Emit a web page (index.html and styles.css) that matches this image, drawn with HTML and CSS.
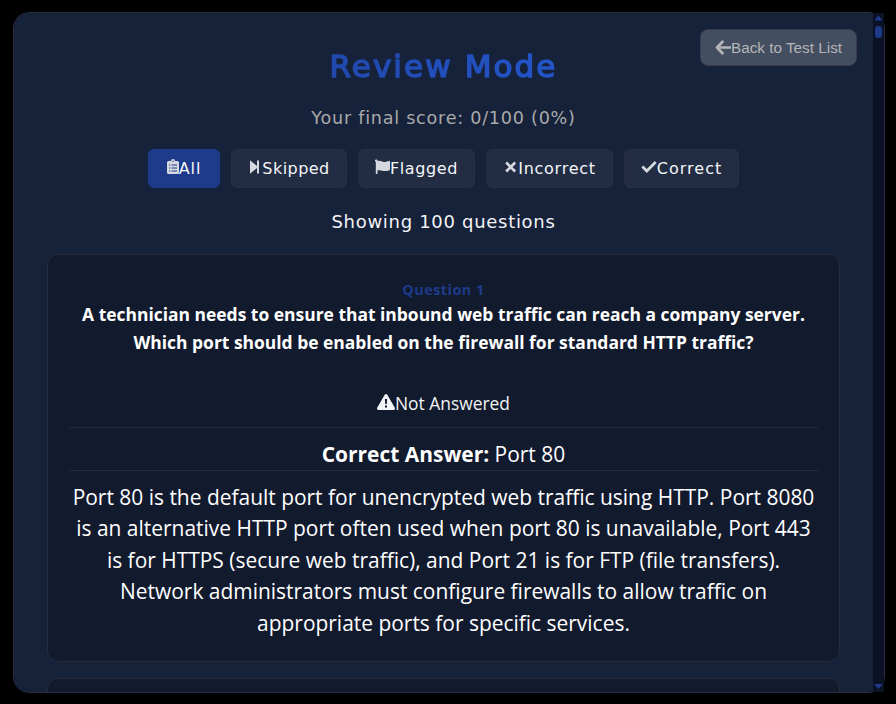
FILE: index.html
```html
<!DOCTYPE html>
<html lang="en">
<head>
<meta charset="utf-8">
<title>Review Mode</title>
<link rel="stylesheet" href="styles.css">
</head>
<body>
<main class="modal">
  <div class="content">
    <button class="back"><svg class="i-back" viewBox="0 0 16 14"><path d="M7.500 1.200 2 7l5.500 5.800M2.500 7H15" fill="none" stroke="currentColor" stroke-width="2.700" stroke-linecap="round" stroke-linejoin="round"/></svg><span>Back to Test List</span></button>
    <h1 class="title">Review Mode</h1>
    <p class="score">Your final score: 0/100 (0%)</p>
    <nav class="filters">
      <button class="filter all active"><svg width="12" height="16" viewBox="0 0 12 16"><path fill="currentColor" fill-rule="evenodd" d="M1.500 2H4a2 2 0 0 1 4 0h2.500A1.500 1.500 0 0 1 12 3.500v10a1.500 1.500 0 0 1-1.500 1.500h-9A1.500 1.500 0 0 1 0 13.500v-10A1.500 1.500 0 0 1 1.500 2ZM5.300 1.800v1h1.400v-1ZM2 5.500v1h1.300v-1Zm2.500 0v1H10v-1ZM2 8.500v1h1.300v-1Zm2.500 0v1H10v-1ZM2 11.500v1h1.300v-1Zm2.500 0v1H10v-1Z"/></svg><span>All</span></button>
      <button class="filter skipped"><svg width="12" height="16" viewBox="0 0 12 16"><path fill="currentColor" d="M0 1.200 7 7V1.500h2v13H7V9l-7 5.800Z"/></svg><span>Skipped</span></button>
      <button class="filter flagged"><svg width="15" height="16" viewBox="0 0 15 16"><path fill="currentColor" d="M1.500.5C2.300.5 2.500 1 2.500 2c3-.8 4 .9 6.500.9 2 0 4-.7 5-1 .7-.2 1 .1 1 .7v8c0 1-3 1.500-5 1.500-3 0-4-1.700-7.500-.6V15H.8V2.800A1.200 1.200 0 0 1 1.500.5Z"/></svg><span>Flagged</span></button>
      <button class="filter incorrect"><svg width="13" height="16" viewBox="0 0 13 16"><path fill="none" stroke="currentColor" stroke-width="2.700" d="m1.200 3.500 9 9m0-9-9 9"/></svg><span>Incorrect</span></button>
      <button class="filter correct"><svg width="16" height="16" viewBox="0 0 16 16"><path fill="none" stroke="currentColor" stroke-width="2.800" d="m1.300 7.500 4.500 4.500L14.700 3"/></svg><span>Correct</span></button>
    </nav>
    <p class="showing">Showing 100 questions</p>
    <article class="card">
      <h2 class="number">Question 1</h2>
      <p class="question">A technician needs to ensure that inbound web traffic can reach a company server.<br>Which port should be enabled on the firewall for standard HTTP traffic?</p>
      <p class="status"><svg width="18" height="16" viewBox="0 0 18 16"><path fill="currentColor" fill-rule="evenodd" d="M7.700.8a1.500 1.500 0 0 1 2.600 0l7.400 12.800A1.500 1.500 0 0 1 16.400 16H1.600A1.500 1.500 0 0 1 .3 13.600ZM7.900 5l.3 5h1.600l.3-5ZM8 11.500v2h2v-2Z"/></svg><span>Not Answered</span></p>
      <p class="answer"><strong>Correct Answer:</strong> Port 80</p>
      <p class="explanation">Port 80 is the default port for unencrypted web traffic using HTTP. Port 8080<br>is an alternative HTTP port often used when port 80 is unavailable, Port 443<br>is for HTTPS (secure web traffic), and Port 21 is for FTP (file transfers).<br>Network administrators must configure firewalls to allow traffic on<br>appropriate ports for specific services.</p>
    </article>
    <article class="card"></article>
  </div>
  <div class="scrollbar">
    <svg width="11" height="8" viewBox="0 0 11 8"><path fill="#1e3a8a" d="M5.500 2.500 9 6.500v1H2v-1Z"/></svg>
    <div class="thumb"></div>
    <svg class="down" width="11" height="8" viewBox="0 0 11 8"><path fill="#1e3a8a" d="M2 0h7v1L5.500 5 2 1Z"/></svg>
  </div>
</main>
</body>
</html>
```
FILE: styles.css
```css
* { box-sizing: border-box; }
body { margin: 0; height: 704px; overflow: hidden; background: #000; padding: 12px 11px 11px 13px; color: #fff; font-family: "Open Sans", sans-serif; }
h1, h2, p { margin: 0; font-weight: 400; white-space: nowrap; }
svg { display: block; flex: none; }
.modal { height: 681px; border: 1px solid #2a2c3d; border-radius: 16px; display: flex; background: #0c1226; }
.content { position: relative; width: 859px; height: 679px; padding: 0 33px; overflow: hidden; background: #16213a; border-radius: 15px 0 0 15px; text-align: center; }
.title, .score, .filter, .showing { font-family: "DejaVu Sans", sans-serif; }
.title { margin-top: 33px; height: 40px; font-size: 31px; font-weight: 400; line-height: 40px; letter-spacing: 2.100px; background: linear-gradient(90deg, #1e3a8a, #2563eb); -webkit-background-clip: text; background-clip: text; color: transparent; -webkit-text-stroke: 1.500px transparent; }
.score { margin-top: 20px; height: 24px; line-height: 24px; font-size: 17.600px; letter-spacing: .75px; color: #aaa; }
.back { position: absolute; right: 16px; top: 16px; width: 157px; height: 37px; display: flex; align-items: center; justify-content: center; border: 1px solid #393b4c; border-radius: 8px; background: #444e61; color: #b4b5b8; font: 15.300px "Liberation Sans", sans-serif; padding: 0; white-space: nowrap; }
.i-back { width: 16px; height: 15px; }
.filters { display: flex; justify-content: center; gap: 11px; margin-top: 19px; }
.filter { height: 39px; display: flex; align-items: center; justify-content: center; padding: 0; border: 1px solid #292d3e; border-radius: 6px; background: #222d44; color: #f4f5f7; font-size: 16px; white-space: nowrap; }
.filter svg { color: #d5d8df; margin-top: -3px; }
.active { background: #1e3a8a; border-color: #1e3a8a; }
.all { width: 72px; letter-spacing: .9px; }
.skipped { width: 116px; letter-spacing: .45px; padding-left: 2px; }
.flagged { width: 117px; letter-spacing: .6px; }
.incorrect { width: 127px; letter-spacing: .75px; padding-left: 2px; }
.correct { width: 115px; letter-spacing: 1px; }
.showing { margin-top: 21px; height: 25px; line-height: 25px; font-size: 18px; letter-spacing: .7px; color: #f2f3f5; }
.card { width: 793px; height: 408px; margin-top: 20px; border: 1px solid #272b3b; border-radius: 11px; padding: 25px 21px; background: #121a2e; }
.card + .card { margin-top: 16px; }
.number { height: 20px; line-height: 20px; font-size: 14.400px; font-weight: 700; letter-spacing: .5px; color: #1e3a8a; }
.question { height: 56px; line-height: 28px; font-size: 17.450px; font-weight: 700; }
.status { display: flex; justify-content: center; align-items: center; margin-top: 33px; height: 38px; padding-bottom: 10px; font-size: 17.400px; color: #f3f4f5; }
.status svg { margin-top: -3px; }
.answer { height: 44px; border-top: 1px solid #262b3a; border-bottom: 1px solid #262b3a; padding-top: 11px; font-size: 20.940px; line-height: 31px; }
.explanation { margin-top: 11px; font-size: 20.940px; line-height: 31.400px; }
.scrollbar { width: 11px; height: 679px; flex: none; display: flex; flex-direction: column; background: #0c1226; }
.thumb { width: 7px; height: 12px; margin: 5px 2px 0; border-radius: 4px; background: #1e3a8a; }
.down { margin-top: auto; }
```
